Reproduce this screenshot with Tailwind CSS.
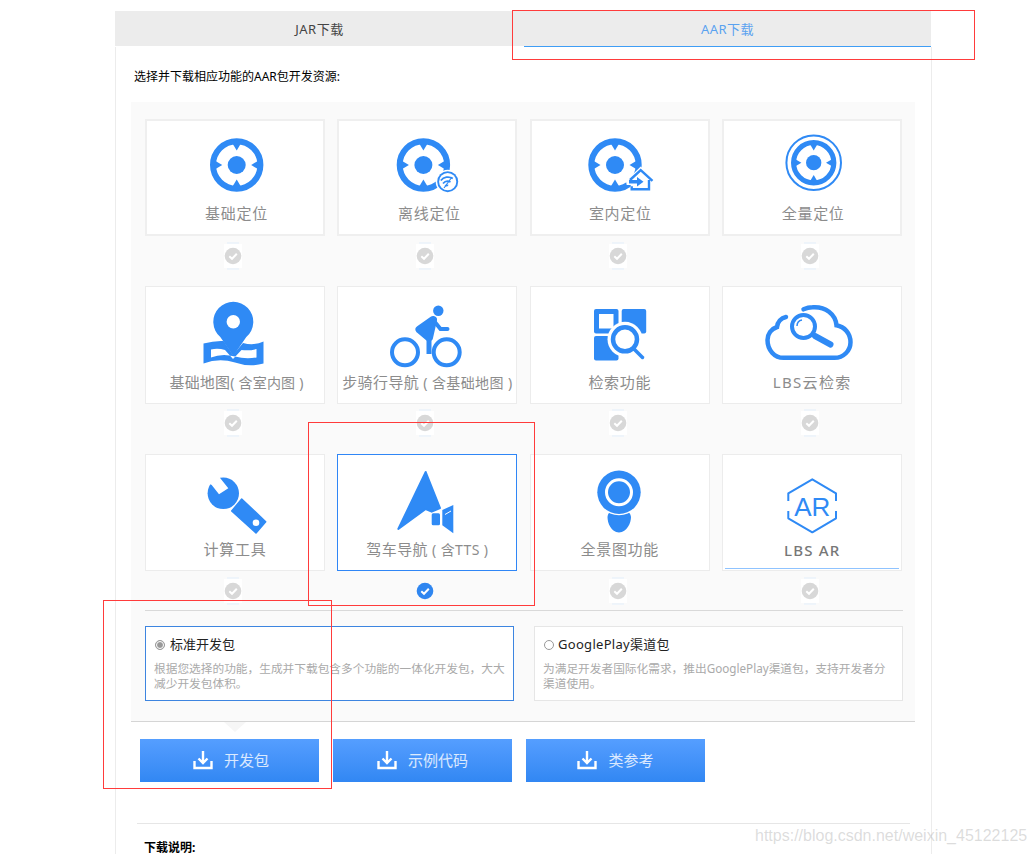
<!DOCTYPE html>
<html lang="en">
<head>
  <meta charset="UTF-8" />
  <title>AAR下载</title>
  <script src="https://cdn.jsdelivr.net/npm/@tailwindcss/browser@4"></script>
</head>
<body class="relative h-[854px] overflow-hidden bg-white font-['Noto_Sans','Noto_Sans_CJK_SC',sans-serif]">

  <!-- shared icons -->
  <svg class="absolute w-0 h-0">
    <symbol id="loc" viewBox="-30 -30 60 60">
      <circle r="23.7" fill="#fff" stroke="#2f8af5" stroke-width="6" />
      <circle r="9" fill="#2f8af5" />
      <polygon points="0,-14.5 -4.5,-22 4.5,-22" fill="#2f8af5" />
      <polygon points="0,14.5 -4.5,22 4.5,22" fill="#2f8af5" />
      <polygon points="-14.5,0 -22,-4.5 -22,4.5" fill="#2f8af5" />
      <polygon points="14.5,0 22,-4.5 22,4.5" fill="#2f8af5" />
    </symbol>
    <symbol id="check-off" viewBox="0 0 30 30">
      <rect x="6" y="3" width="18" height="24" fill="#fff" />
      <path d="M9 2h12M9 28h12" stroke="#e3effb" stroke-width="1" />
      <circle cx="15" cy="15" r="8.3" fill="#d8d8d8" />
      <path d="M11.3 15.2l2.7 2.6 4.8-5" fill="none" stroke="#fff" stroke-width="2" />
    </symbol>
    <symbol id="check-on" viewBox="0 0 30 30">
      <circle cx="15" cy="15" r="8.3" fill="#2f86f0" />
      <path d="M11.3 15.2l2.7 2.6 4.8-5" fill="none" stroke="#fff" stroke-width="2" />
    </symbol>
    <symbol id="dl" viewBox="0 0 20 20">
      <path d="M1.5 11v7h17v-7" fill="none" stroke="#fff" stroke-width="2.4" />
      <path d="M10 1v11.5M5.5 8.5l4.5 4.5 4.5-4.5" fill="none" stroke="#fff" stroke-width="2.4" />
    </symbol>
  </svg>

  <div class="ml-[115px] w-[817px] pt-[11px]">

    <!-- Tabs -->
    <div class="flex h-[36px]">
      <div class="w-[409px] h-[35px] bg-[#ececec] text-center text-[13px] tracking-[0.5px] leading-[37px] text-[#444]">JAR下载</div>
      <div class="w-[407px] h-[36px] bg-[#ececec] border-b border-[#3f9df5] text-center text-[13px] tracking-[0.5px] leading-[37px] text-[#5aa2f0]">AAR下载</div>
    </div>

    <div class="h-[808px] border-x border-[#ececec]">
      <p class="pl-[18px] pt-[21px] h-[55px] text-[12px] leading-[18px] text-black whitespace-nowrap">选择并下载相应功能的AAR包开发资源:</p>

      <!-- Feature panel -->
      <div class="relative ml-[15px] w-[784px] bg-[#fafafa] border-b border-[#d5d5d5] pt-[17px] px-[14px] pb-[20px]">
        <div class="grid grid-cols-[180px_180px_180px_180px] grid-rows-[167px_168px_156px] gap-x-[12.4px]">

          <!-- Row 1 -->
          <div class="flex flex-col items-center">
            <div class="w-full h-[117px] bg-white border-2 border-[#efefef] flex flex-col items-center">
              <svg class="w-[120px] h-[75px] mt-[8px]" viewBox="175 129 120 75"><use href="#loc" x="206.7" y="135" width="60" height="60" /></svg>
              <div class="h-5 leading-5 -mt-[1px] pl-[3px] text-[15px] tracking-[0.7px] text-[#8c8c8c] whitespace-nowrap">基础定位</div>
            </div>
            <svg class="w-[30px] h-[30px] mt-[5px] mr-[4px]"><use href="#check-off" /></svg>
          </div>
          <div class="flex flex-col items-center">
            <div class="w-full h-[117px] bg-white border-2 border-[#efefef] flex flex-col items-center">
              <svg class="w-[120px] h-[75px] mt-[8px]" viewBox="367 129 120 75">
                <use href="#loc" x="393.4" y="135" width="60" height="60" />
                <circle cx="447.7" cy="181.7" r="12" fill="#fff" />
                <circle cx="447.7" cy="181.7" r="10.5" fill="#2f8af5" />
                <circle cx="447.7" cy="181.7" r="8.6" fill="#fff" />
                <path d="M440.8 180.5a9 9 0 0 1 12-2M443 183.5a6 6 0 0 1 7.5-1.5M445.2 186.2a2.5 2.5 0 0 1 3-.6" fill="none" stroke="#2f8af5" stroke-width="1.7" />
                <path d="M444 188l8-11" stroke="#2f8af5" stroke-width="1.2" />
              </svg>
              <div class="h-5 leading-5 -mt-[1px] pl-[4px] text-[15px] tracking-[0.7px] text-[#8c8c8c] whitespace-nowrap">离线定位</div>
            </div>
            <svg class="w-[30px] h-[30px] mt-[5px] mr-[4px]"><use href="#check-off" /></svg>
          </div>
          <div class="flex flex-col items-center">
            <div class="w-full h-[117px] bg-white border-2 border-[#efefef] flex flex-col items-center">
              <svg class="w-[120px] h-[75px] mt-[8px]" viewBox="560 129 120 75">
                <use href="#loc" x="585" y="135" width="60" height="60" />
                <path d="M626 181l14.7-14.500 15 14.500-3 2v8h-22v-6h-4z" fill="#fff" />
                <path d="M630 180l10.700-9.800 11.800 10.700M649 180v9.300h-17.300v-3" fill="none" stroke="#2f8af5" stroke-width="2.400" />
                <path d="M629 180h8v-3l6.500 4.700-6.500 4.700v-3h-8z" fill="#2f8af5" />
              </svg>
              <div class="h-5 leading-5 -mt-[1px] pl-[1px] text-[15px] tracking-[0.7px] text-[#8c8c8c] whitespace-nowrap">室内定位</div>
            </div>
            <svg class="w-[30px] h-[30px] mt-[5px] mr-[4px]"><use href="#check-off" /></svg>
          </div>
          <div class="flex flex-col items-center">
            <div class="w-full h-[117px] bg-white border-2 border-[#efefef] flex flex-col items-center">
              <svg class="w-[120px] h-[75px] mt-[8px]" viewBox="752 129 120 75">
                <circle cx="813.7" cy="162.7" r="27.3" fill="none" stroke="#2f8af5" stroke-width="2" />
                <use href="#loc" x="788.2" y="137.2" width="51" height="51" />
              </svg>
              <div class="h-5 leading-5 -mt-[1px] pl-[2px] text-[15px] tracking-[0.7px] text-[#8c8c8c] whitespace-nowrap">全量定位</div>
            </div>
            <svg class="w-[30px] h-[30px] mt-[5px] mr-[4px]"><use href="#check-off" /></svg>
          </div>

          <!-- Row 2 -->
          <div class="flex flex-col items-center">
            <div class="w-full h-[118px] bg-white border border-[#ececec] flex flex-col items-center">
              <svg class="w-[120px] h-[75px] mt-[9px]" viewBox="175 296 120 75">
                <path d="M203.500 343.500q11-3 20-2.500l9.500 14 10-12q11 3 20.500-1.500v22q-14 4-28.500-1-16-5-31.500 1z" fill="#2f8af5" />
                <path d="M211 349.500q7-1.500 14 .5l8 9 8.500-9q8 1 15-1v8.500q-11 2-21.500-1-13-3.500-24 1z" fill="#fff" />
                <path d="M233.300 356l-13-19a20 20 0 1 1 26 0z" fill="#2f8af5" />
                <circle cx="233.300" cy="321.700" r="6.700" fill="#fff" />
              </svg>
              <div class="h-5 leading-5 mt-[1px] pl-[3px] text-[15px] tracking-[0.2px] text-[#8c8c8c] whitespace-nowrap">基础地图<span class="text-[14px]">( 含室内图 )</span></div>
            </div>
            <svg class="w-[30px] h-[30px] mt-[4px] mr-[4px]"><use href="#check-off" /></svg>
          </div>
          <div class="flex flex-col items-center">
            <div class="w-full h-[118px] bg-white border border-[#ececec] flex flex-col items-center">
              <svg class="w-[120px] h-[75px] mt-[9px]" viewBox="367 296 120 75">
                <circle cx="405" cy="352.300" r="13" fill="none" stroke="#2f8af5" stroke-width="4" />
                <circle cx="446.700" cy="352.300" r="13" fill="none" stroke="#2f8af5" stroke-width="4" />
                <circle cx="438.300" cy="310.700" r="5.200" fill="#2f8af5" />
                <path d="M433 320l-13.500 9.500 9.500 8z" fill="#2f8af5" stroke="#2f8af5" stroke-width="8" stroke-linejoin="round" />
                <path d="M429 336v18" fill="none" stroke="#2f8af5" stroke-width="5" />
                <path d="M434 321l6.500 8h7" fill="none" stroke="#2f8af5" stroke-width="4" stroke-linecap="round" />
              </svg>
              <div class="h-5 leading-5 mt-[1px] text-[15px] tracking-[0.4px] text-[#8c8c8c] whitespace-nowrap">步骑行导航<span class="text-[14px]"> ( 含基础地图 )</span></div>
            </div>
            <svg class="w-[30px] h-[30px] mt-[4px] mr-[4px]"><use href="#check-off" /></svg>
          </div>
          <div class="flex flex-col items-center">
            <div class="w-full h-[118px] bg-white border border-[#ececec] flex flex-col items-center">
              <svg class="w-[120px] h-[75px] mt-[9px]" viewBox="560 296 120 75">
                <rect x="594" y="309" width="24.500" height="24.500" rx="2" fill="#2f8af5" />
                <rect x="599" y="314" width="14.500" height="14.500" fill="#fff" />
                <rect x="621.700" y="309" width="24.500" height="24.500" rx="2" fill="#2f8af5" />
                <rect x="594" y="336" width="24.500" height="24.500" rx="2" fill="#2f8af5" />
                <circle cx="625" cy="339.300" r="17.500" fill="#fff" />
                <path d="M634 349.500l8 8.500" stroke="#fff" stroke-width="8" />
                <circle cx="625" cy="339.300" r="12" fill="#fff" stroke="#2f8af5" stroke-width="4.500" />
                <path d="M634 349l8.500 8.500" stroke="#2f8af5" stroke-width="3.500" stroke-linecap="round" />
              </svg>
              <div class="h-5 leading-5 mt-[1px] text-[15px] tracking-[0.7px] text-[#8c8c8c] whitespace-nowrap">检索功能</div>
            </div>
            <svg class="w-[30px] h-[30px] mt-[4px] mr-[4px]"><use href="#check-off" /></svg>
          </div>
          <div class="flex flex-col items-center">
            <div class="w-full h-[118px] bg-white border border-[#ececec] flex flex-col items-center">
              <svg class="w-[120px] h-[75px] mt-[9px]" viewBox="752 296 120 75">
                <path d="M786 317c-5 1-8.500 5-9 10-6 2-9.500 7-9.500 13 0 10 7 17.800 16 17.800h51c9 0 16-7 16-15.500 0-9-6-15.500-14-17-1-11-11-19-24-18-3 0-6 .7-9 2" fill="none" stroke="#2f8af5" stroke-width="4.500" stroke-linecap="round" />
                <circle cx="803.500" cy="326.500" r="11.500" fill="#fff" stroke="#2f8af5" stroke-width="4" />
                <path d="M815 336l15.500 8.500" stroke="#2f8af5" stroke-width="6" stroke-linecap="round" />
                <path d="M797 326c0-3 2-5.500 5-6" fill="none" stroke="#2f8af5" stroke-width="1.500" />
              </svg>
              <div class="h-5 leading-5 mt-[1px] text-[15px] tracking-[1.3px] text-[#8c8c8c] whitespace-nowrap">LBS云检索</div>
            </div>
            <svg class="w-[30px] h-[30px] mt-[4px] mr-[4px]"><use href="#check-off" /></svg>
          </div>

          <!-- Row 3 -->
          <div class="flex flex-col items-center">
            <div class="w-full h-[117px] bg-white border border-[#ececec] flex flex-col items-center">
              <svg class="w-[120px] h-[75px] mt-[9px]" viewBox="175 464 120 75">
                <circle cx="223.300" cy="493.300" r="15.700" fill="#2f8af5" />
                <path d="M210 484l1.700 1 7.300 9.300 9.300-6-8-10-1-3h-10z" fill="#fff" />
                <path d="M241.700 499l24 22.700-9.700 11.300-24.300-22z" fill="#2f8af5" stroke="#2f8af5" stroke-width="1.500" stroke-linejoin="round" />
                <circle cx="256" cy="522.700" r="3.300" fill="#fff" />
              </svg>
              <div class="h-5 leading-5 text-[15px] tracking-[0.7px] text-[#8c8c8c] whitespace-nowrap">计算工具</div>
            </div>
            <svg class="w-[30px] h-[30px] mt-[5px] mr-[4px]"><use href="#check-off" /></svg>
          </div>
          <div class="flex flex-col items-center">
            <div class="w-full h-[117px] bg-white border border-[#2f86f6] flex flex-col items-center">
              <svg class="w-[120px] h-[75px] mt-[9px]" viewBox="367 464 120 75">
                <path d="M425.700 472l14.300 36-8.300 3.700-6-2.700-27.400 20z" fill="#2f8af5" stroke="#2f8af5" stroke-width="2" stroke-linejoin="round" />
                <path d="M442.300 510l11-5v28.300l-11-8z" fill="#fff" stroke="#fff" stroke-width="3" />
                <rect x="431.700" y="513.300" width="8.300" height="12" rx="1.500" fill="#2f8af5" />
                <path d="M442.300 510l11-5v28.300l-11-8z" fill="#2f8af5" />
                <path d="M445 514.500l6-3.500" stroke="#fff" stroke-width="1" />
              </svg>
              <div class="h-5 leading-5 text-[15px] tracking-[0.4px] text-[#8c8c8c] whitespace-nowrap">驾车导航<span class="text-[14px]"> ( 含TTS )</span></div>
            </div>
            <svg class="w-[30px] h-[30px] mt-[5px] mr-[4px]"><use href="#check-on" /></svg>
          </div>
          <div class="flex flex-col items-center">
            <div class="w-full h-[117px] bg-white border border-[#ececec] flex flex-col items-center">
              <svg class="w-[120px] h-[75px] mt-[9px]" viewBox="560 464 120 75">
                <path d="M607.500 517c.5-6 5.500-7 11.500-6 6-1 11.500 0 12 6 0 6-4 15-12 15.500-8-.5-11.500-9.500-11.500-15.500z" fill="#2f8af5" />
                <circle cx="619" cy="492.300" r="23" fill="#fff" />
                <circle cx="619" cy="492.300" r="21.700" fill="#2f8af5" />
                <circle cx="619" cy="492.300" r="12.500" fill="none" stroke="#fff" stroke-width="3" />
              </svg>
              <div class="h-5 leading-5 text-[15px] tracking-[0.7px] text-[#8c8c8c] whitespace-nowrap">全景图功能</div>
            </div>
            <svg class="w-[30px] h-[30px] mt-[5px] mr-[4px]"><use href="#check-off" /></svg>
          </div>
          <div class="flex flex-col items-center">
            <div class="relative w-full h-[117px] bg-white border border-[#ececec] flex flex-col items-center">
              <svg class="w-[120px] h-[75px] mt-[9px]" viewBox="752 464 120 75">
                <path d="M788.300 501v-7.700l24-14 23.700 14v7.700M788.300 511v7.300l24 14 23.700-14v-7.300" fill="none" stroke="#2f8af5" stroke-width="2" stroke-linejoin="round" />
                <text x="812.300" y="516" text-anchor="middle" font-size="26" fill="#2f8af5" font-family="Liberation Sans">AR</text>
              </svg>
              <div class="h-5 leading-5 mt-[1px] text-[15px] font-medium tracking-[1.2px] text-[#777] whitespace-nowrap">LBS AR</div>
              <div class="absolute left-[2px] right-[2px] bottom-[1px] h-px bg-[#8fc3ff]"></div>
            </div>
            <svg class="w-[30px] h-[30px] mt-[5px] mr-[4px]"><use href="#check-off" /></svg>
          </div>
        </div>

        <!-- Package type -->
        <div class="w-[758px] border-t border-[#d9d9d9] pt-[15px] grid grid-cols-[369px_369px] gap-x-[20px]">
          <div class="h-[75px] bg-white border border-[#3d85e0] pl-[8px] pt-[8px]">
            <div class="flex items-center h-5 text-[13px] text-[#222]">
              <span class="w-[10px] h-[10px] rounded-full border border-[#999] bg-[#999] outline outline-1 -outline-offset-2 outline-white ml-[1px] mr-[5px]"></span>标准开发包
            </div>
            <p class="mt-[6px] text-[11.7px] leading-[15px] text-[#aaa] whitespace-nowrap">根据您选择的功能，生成并下载包含多个功能的一体化开发包，大大<br />减少开发包体积。</p>
          </div>
          <div class="h-[75px] bg-white border border-[#e6e6e6] pl-[8px] pt-[8px]">
            <div class="flex items-center h-5 text-[13px] tracking-[0.3px] text-[#222]">
              <span class="w-[10px] h-[10px] rounded-full border border-[#999] bg-white ml-[1px] mr-[4px]"></span>GooglePlay渠道包
            </div>
            <p class="mt-[6px] text-[11.7px] leading-[15px] text-[#aaa] whitespace-nowrap">为满足开发者国际化需求，推出GooglePlay渠道包，支持开发者分<br />渠道使用。</p>
          </div>
        </div>

        <!-- little pointer under the panel -->
        <svg class="absolute left-[93px] -bottom-[11px] w-[22px] h-[10px]" viewBox="0 0 22 10"><path d="M0 0l11 10L22 0z" fill="#f6f6f6" /></svg>
      </div>

      <!-- Download buttons -->
      <div class="flex gap-x-[14px] ml-[24px] mt-[17px]">
        <div class="w-[179px] h-[43px] flex items-center justify-center gap-x-[11px] pl-[3px] bg-linear-to-b from-[#559eff] to-[#3187f3] text-[15px] text-white/80">
          <svg class="w-5 h-5 mb-[2px]"><use href="#dl" /></svg>开发包
        </div>
        <div class="w-[179px] h-[43px] flex items-center justify-center gap-x-[11px] bg-linear-to-b from-[#559eff] to-[#3187f3] text-[15px] text-white/80">
          <svg class="w-5 h-5 mb-[2px]"><use href="#dl" /></svg>示例代码
        </div>
        <div class="w-[179px] h-[43px] flex items-center justify-center gap-x-[11px] bg-linear-to-b from-[#559eff] to-[#3187f3] text-[15px] text-white/80">
          <svg class="w-5 h-5 mb-[2px]"><use href="#dl" /></svg>类参考
        </div>
      </div>

      <div class="ml-[21px] w-[773px] mt-[41px] border-t border-[#e6e6e6] pl-[7px] pt-[14px] text-[12px] font-bold text-black leading-5">下载说明:</div>
    </div>
  </div>

  <!-- annotation boxes and watermark -->
  <div class="absolute left-[512px] top-[10px] w-[463px] h-[50px] border border-[#ff3b3b]"></div>
  <div class="absolute left-[308px] top-[422px] w-[227px] h-[184px] border border-[#ff3b3b]"></div>
  <div class="absolute left-[103px] top-[600px] w-[229px] h-[189px] border border-[#ff3b3b]"></div>
  <div class="absolute left-[755px] top-[825px] text-[16px] leading-[21px] text-[#9a9a9a]/35 font-['Liberation_Sans',sans-serif] whitespace-nowrap">https://blog.csdn.net/weixin_45122125</div>
</body>
</html>
